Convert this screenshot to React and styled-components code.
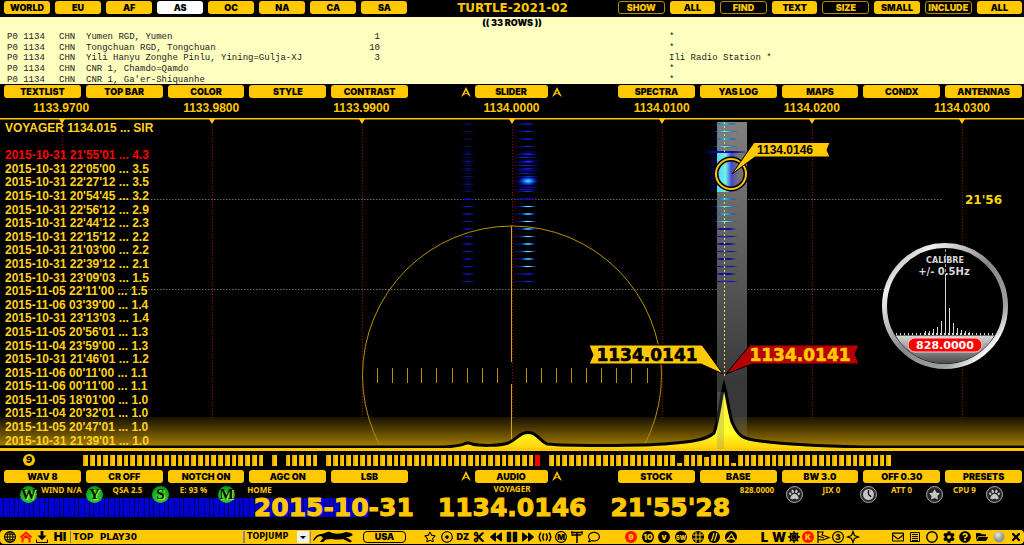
import React from "react";
import styled, { createGlobalStyle, css } from "styled-components";
import {
  FaPaw, FaStar, FaRegStar, FaRegDotCircle, FaCut, FaBackward, FaPause, FaForward,
  FaRegComment, FaRegEnvelope, FaFolderOpen, FaCog, FaQuestionCircle, FaTimes,
} from "react-icons/fa";

const gold = "#ffc800";
const heavy = `Inter, "DejaVu Sans", sans-serif`;
const arial = `"Liberation Sans", Arial, sans-serif`;
const verdana = `"DejaVu Sans", Verdana, sans-serif`;

const GlobalStyle = createGlobalStyle`
  * { box-sizing: border-box; }
  body { margin: 0; background: #000; overflow-x: hidden; }
  button, input, select { font: inherit; color: inherit; margin: 0; padding: 0; border: 0; background: none; }
`;

const Page = styled.main`
  display: flex;
  flex-direction: column;
  background: #000;
  color: ${gold};
  font: 900 9px/10px ${heavy};
`;

const Bar = styled.nav`
  display: grid;
  grid-template-columns: ${(p) => p.$columns};
  align-items: center;
  height: ${(p) => p.$height || 17}px;
  padding: 0 2px ${(p) => (p.$height ? 0 : 2)}px 4px;
`;

const Group = styled.div`
  display: flex;
  gap: 5px;
`;

const Centre = styled.div`
  display: flex;
  align-items: center;
  justify-content: center;
  gap: 4px;
  padding-right: 4px;
`;

const Key = styled.button`
  flex: 1 1 0;
  min-width: 0;
  height: 13px;
  border-radius: 3px;
  background: ${gold};
  color: #000;
  font: 900 9px/13px ${heavy};
  text-align: center;
  white-space: nowrap;
  ${(p) => p.$active && css`background: #fff;`}
  ${(p) => p.$outline && css`
    background: #000;
    color: ${gold};
    border: 1px solid #b48c00;
    line-height: 11px;
  `}
`;

const CentreKey = styled(Key)`
  flex: 0 0 73px;
`;

const ArrowKey = styled.button`
  display: flex;
  width: 10px;
  height: 10px;
`;

const Title = styled.h1`
  margin: 0;
  text-align: center;
  font: 700 12px/14px ${verdana};
  white-space: nowrap;
`;

const Listing = styled.section`
  height: 67px;
  overflow: hidden;
  background: #ffffc0;
  color: #000;
`;

const Count = styled.p`
  margin: 0;
  height: 15px;
  font: 900 9px/12px ${heavy};
  text-align: center;
`;

const Stations = styled.table`
  width: 100%;
  height: 53px;
  table-layout: fixed;
  border-collapse: collapse;
  font: 400 9px/10px "Liberation Mono", monospace;
  color: #222;
  td { padding: 0; white-space: pre; overflow: visible; }
  td:first-child { padding-left: 7px; }
  td.power { text-align: right; }
  td.remark { padding-left: 289px; }
`;

const Scale = styled.div`
  display: flex;
  justify-content: space-between;
  height: 16px;
  padding: 0 34px 0 33px;
  font: 700 12px/15px ${arial};
`;

const Plot = styled.section`
  position: relative;
  > svg { display: block; width: 100%; height: auto; }
`;

const Log = styled.ol`
  position: absolute;
  inset: 5px auto 3px 5px;
  display: flex;
  flex-direction: column;
  justify-content: space-between;
  margin: 0;
  padding: 0;
  list-style: none;
  font: 700 12px/13px ${arial};
  color: #ffd21c;
  white-space: pre;
`;

const LogRow = styled.li`
  min-height: 13px;
  color: ${(p) => (p.$alert ? "#ff0000" : "inherit")};
`;

const Timeline = styled.div`
  display: flex;
  align-items: center;
  height: 18px;
  padding: 0 133px 0 23px;
`;

const Nine = styled.button`
  width: 12px;
  height: 12px;
  margin-right: 48px;
  border-radius: 50%;
  background: ${gold};
  color: #000;
  font: 900 9px/12px ${heavy};
`;

const Bars = styled.div`
  flex: 1;
  display: flex;
  align-items: flex-end;
  gap: 2px;
  height: 11px;
`;

const Tick = styled.i`
  flex: 1 1 0;
  height: ${(p) => p.$height}px;
  background: ${(p) => (p.$red ? "#ff0000" : `linear-gradient(90deg, #e0a800 20%, ${gold} 50%)`)};
`;

const Status = styled.div`
  position: relative;
  z-index: 1;
  display: grid;
  grid-template-columns: 20fr 66fr 66fr 66fr 66fr 444fr 75fr 74fr 66fr 60fr 21fr;
  height: 14px;
  font: 700 8px/12px "Noto Sans", sans-serif;
  white-space: nowrap;
`;

const Reading = styled.div`
  display: flex;
  align-items: flex-start;
  span { flex: 1; padding-top: 1px; text-align: center; }
`;

const Station = styled.div`
  grid-column: 6;
  padding-left: 12px;
  text-align: center;
  line-height: 12px;
`;

const Badge = styled.button`
  display: flex;
  align-items: center;
  justify-content: center;
  flex: none;
  width: 17px;
  height: 17px;
  margin-top: 3px;
  border-radius: 50%;
  ${(p) => (p.$green
    ? css`
      background: radial-gradient(circle at 50% 70%, #2ee03c, #12a820 60%, #0a7014);
      color: #001000;
      font: 700 15px/17px "Liberation Serif", serif;
      text-shadow: 1px 1px 0 #c8e020;
    `
    : css`
      border: 1px solid #a8a8a8;
      box-shadow: inset 0 0 0 1px #333;
      background: #202020;
      color: #c4c4c4;
      svg { width: 11px; height: 11px; }
    `)}
`;

const Readout = styled.div`
  display: flex;
  justify-content: center;
  gap: 24px;
  height: 22px;
  padding-right: 40px;
  font: 700 25px/22px ${verdana};
  -webkit-text-stroke: 1px ${gold};
  white-space: nowrap;
  background:
    repeating-linear-gradient(90deg, transparent 0 3px, #00003c 3px 4px, transparent 4px 9px, #000070 9px 10px, transparent 10px 14px, #000050 14px 15px) 0 1px / 36% 19px no-repeat,
    linear-gradient(#0000d6, #0000d6) 0 1px / 36% 19px no-repeat;
`;

const Toolbar = styled.footer`
  display: grid;
  grid-template-columns: 363fr 43fr 16fr 180fr 21fr 116fr 18fr 103fr 30fr 134fr;
  align-items: center;
  height: 14px;
  margin-top: 11px;
  border-radius: 4px;
  background: ${gold};
  color: #000;
`;

const Tools = styled.div`
  grid-column: ${(p) => p.$column};
  display: grid;
  grid-auto-flow: column;
  grid-auto-columns: 1fr;
`;

const Tool = styled.button`
  display: flex;
  align-items: center;
  justify-content: center;
  min-width: 0;
  height: 14px;
  color: ${(p) => p.$color || "#000"};
  font: 900 ${(p) => p.$size || 13}px/14px ${heavy};
  svg { width: 12px; height: 12px; flex: none; overflow: visible; }
`;

const Command = styled.div`
  display: flex;
  align-items: center;
  height: 14px;
  padding-left: 2px;
  ${Tool} { width: 16px; }
  ${Tool}:nth-of-type(4) { width: 20px; }
`;

const Entry = styled.input`
  flex: 1;
  min-width: 0;
  height: 12px;
  padding-left: 2px;
  border-left: 1px solid #777;
  border-right: 2px solid #888;
  font: 700 9px/12px ${verdana};
`;

const Picker = styled.label`
  position: relative;
  display: block;
  width: 66px;
  height: 12px;
  border-right: 1px solid #888;
  select {
    appearance: none;
    width: 100%;
    height: 12px;
    padding-left: 2px;
    font: 700 8px/12px ${verdana};
  }
  svg { position: absolute; right: 1px; top: 0; pointer-events: none; }
`;

const Cat = styled.svg`
  width: 41px;
  height: 12px;
  margin: 0 9px 0 2px;
`;

const Country = styled.button`
  height: 12px;
  border: 1px solid #000;
  border-radius: 4px;
  font: 900 9px/10px ${heavy};
`;

const regions = ["WORLD", "EU", "AF", "AS", "OC", "NA", "CA", "SA"];
const filters = ["SHOW", "ALL", "FIND", "TEXT", "SIZE", "SMALL", "INCLUDE", "ALL"];

const stations = [
  ["Yumen RGD, Yumen", "1", "*"],
  ["Tongchuan RGD, Tongchuan", "10", "*"],
  ["Yili Hanyu Zonghe Pinlu, Yining=Gulja-XJ", "3", "Ili Radio Station *"],
  ["CNR 1, Chamdo=Qamdo", "", "*"],
  ["CNR 1, Ga'er-Shiquanhe", "", "*"],
];

const frequencies = ["1133.9700", "1133.9800", "1133.9900", "1134.0000", "1134.0100", "1134.0200", "1134.0300"];

const log = [
  "VOYAGER 1134.015 ... SIR", "",
  "2015-10-31 21'55'01 ... 4.3", "2015-10-31 22'05'00 ... 3.5", "2015-10-31 22'27'12 ... 3.5",
  "2015-10-31 20'54'45 ... 3.2", "2015-10-31 22'56'12 ... 2.9", "2015-10-31 22'44'12 ... 2.3",
  "2015-10-31 22'15'12 ... 2.2", "2015-10-31 21'03'00 ... 2.2", "2015-10-31 22'39'12 ... 2.1",
  "2015-10-31 23'09'03 ... 1.5", "2015-11-05 22'11'00 ... 1.5", "2015-11-06 03'39'00 ... 1.4",
  "2015-10-31 23'13'03 ... 1.4", "2015-11-05 20'56'01 ... 1.3", "2015-11-04 23'59'00 ... 1.3",
  "2015-10-31 21'46'01 ... 1.2", "2015-11-06 00'11'00 ... 1.1", "2015-11-06 00'11'00 ... 1.1",
  "2015-11-05 18'01'00 ... 1.0", "2015-11-04 20'32'01 ... 1.0", "2015-11-05 20'47'01 ... 1.0",
  "2015-10-31 21'39'01 ... 1.0",
];

const emptySlots = [27, 29, 35, 68];
const shortSlots = { 88: 3, 92: 9, 96: 3 };
const slots = Array.from({ length: 120 }, (_, i) =>
  emptySlots.includes(i) ? 0 : shortSlots[i] || 11
);

const Chevron = ({ label }) => (
  <ArrowKey aria-label={label}>
    <svg width="10" height="10" viewBox="0 0 10 10">
      <path d="M5 0L10 10L5 6.500L0 10Z M5 3.5L3.300 7L5 5.500L6.700 7Z" fill={gold} fillRule="evenodd" />
    </svg>
  </ArrowKey>
);

const Keys = ({ items }) => (
  <Group>{items.map((t) => <Key key={t}>{t}</Key>)}</Group>
);

const KeyBar = ({ left, centre, right, height }) => (
  <Bar $columns="404fr 210fr 404fr" $height={height}>
    <Keys items={left} />
    <Centre>
      <Chevron label={`${centre} down`} />
      <CentreKey>{centre}</CentreKey>
      <Chevron label={`${centre} up`} />
    </Centre>
    <Keys items={right} />
  </Bar>
);

const Disc = ({ text, fill = "#000", ink = gold, ring, size = 8 }) => (
  <svg viewBox="0 0 12 12">
    <circle cx="6" cy="6" r={ring ? 5.4 : 6} fill={ring ? "none" : fill} stroke={ring ? "#000" : "none"} strokeWidth="1.2" />
    <text x="6" y="9" textAnchor="middle" fontFamily={heavy} fontWeight="900" fontSize={size} fill={ring ? "#000" : ink}>{text}</text>
  </svg>
);

const Globe = () => (
  <svg viewBox="0 0 12 12" fill="none" stroke="#000">
    <circle cx="6" cy="6" r="5.4" strokeWidth="1.2" />
    <path d="M6 0.5V11.5M0.5 6H11.5M1.5 3.2H10.5M1.5 8.8H10.5" />
    <ellipse cx="6" cy="6" rx="2.8" ry="5.4" />
  </svg>
);

const GlobeSolid = () => (
  <svg viewBox="0 0 12 12">
    <circle cx="6" cy="6" r="6" />
    <path d="M4 1V11M8 1V11M1 4H11M1 8H11" stroke={gold} strokeWidth="1.1" />
  </svg>
);

const House = () => (
  <svg viewBox="0 0 12 12" fill="none" stroke="#ff1800" strokeWidth="2">
    <path d="M0.5 6.5L6 1.5L11.5 6.5M2.5 11.5V8L6 5L9.5 8V11.5" />
  </svg>
);

const Fetch = () => (
  <svg viewBox="0 0 12 12">
    <path d="M4.6 0H7.4V4.5H10.5L6 9.2L1.5 4.5H4.6Z" />
    <path d="M0.5 8.5V11.5H11.5V8.5" fill="none" stroke="#000" />
  </svg>
);

const Helm = () => (
  <svg viewBox="0 0 12 12" fill="none" stroke="#000">
    <circle cx="6" cy="6" r="3.800" strokeWidth="1.600" />
    <path d="M6 0V12M0 6H12M1.800 1.800L10.200 10.200M10.200 1.800L1.800 10.200" strokeWidth="1.300" />
  </svg>
);

const Waves = () => (
  <svg viewBox="0 0 12 12" fill="none" stroke="#000" strokeWidth="1.5">
    <path d="M2 1.5Q-1.5 6 2 10.5M5 2.5Q2.400 6 5 9.5M7 2.5Q9.600 6 7 9.5M10 1.5Q13.500 6 10 10.5" />
  </svg>
);

const Aerial = () => (
  <svg viewBox="0 0 12 12" fill="none" stroke="#000">
    <path d="M0 1.500H12M1 4H10M6 1V12" strokeWidth="1.6" />
    <path d="M1 0V5M11 0V4" />
  </svg>
);

const Slashes = () => (
  <svg viewBox="0 0 12 12">
    <circle cx="6" cy="6" r="6" />
    <path d="M3.500 10L6 2M6.5 10L9 2" stroke={gold} strokeWidth="1.3" />
  </svg>
);

const Peak = () => (
  <svg viewBox="0 0 12 12">
    <circle cx="6" cy="6" r="6" />
    <path d="M2 8.500L6.500 3L10 9L7 7.500Z" fill="none" stroke={gold} strokeWidth="1.2" />
  </svg>
);

const Pennant = () => (
  <svg viewBox="0 0 12 12" fill="none" stroke="#000" strokeWidth="1.2">
    <path d="M1 0V12M0 1H6L5 4L12 6.500L6 9L1 8.500M1 5L7 7" />
  </svg>
);

const Spark = () => (
  <svg viewBox="0 0 12 12" fill="none" stroke="#000" strokeWidth="1.2">
    <path d="M6 0.500L7.500 4.500L11.500 6L7.500 7.500L6 11.500L4.500 7.500L0.500 6L4.500 4.500Z" />
  </svg>
);

const Sheet = () => (
  <svg viewBox="0 0 12 12" fill="none" stroke="#000">
    <path d="M1.500 1.500H10.500V10.500H1.500ZM3 3.500H9M3 5.500H9M3 7.500H9M3 9.500H9" />
  </svg>
);

const Ring = () => (
  <svg viewBox="0 0 12 12"><circle cx="6" cy="6" r="5.200" fill="none" stroke="#000" strokeWidth="1.4" /></svg>
);

const Ball = () => (
  <svg viewBox="0 0 12 12">
    <defs>
      <radialGradient id="ball" cx="0.4" cy="0.3">
        <stop offset="0" stopColor="#e8e8e8" /><stop offset="1" stopColor="#969696" />
      </radialGradient>
    </defs>
    <circle cx="6" cy="6" r="5.5" fill="url(#ball)" />
  </svg>
);

const Clock = () => (
  <svg viewBox="0 0 12 12">
    <circle cx="6" cy="6" r="6" fill="#c4c4c4" />
    <path d="M6 1V6L9 8.500" fill="none" stroke="#111" strokeWidth="1.5" />
  </svg>
);

const rowStep = 7.5;
const streakRows = Array.from({ length: 22 }, (_, i) => 124 + i * rowStep);

const Streak = ({ x, y, w, kind, o = 1 }) => (
  <ellipse cx={x} cy={y} rx={w} ry="1.2" fill={`url(#${kind})`} opacity={o} />
);

const Waterfall = () => (
  <g>
    {streakRows.map((y, i) => {
      const dense = i >= 4 && i <= 9;
      return (
        <g key={y}>
          <Streak x={468} y={y} w={9} kind="blue" o={i > 9 ? 0.8 : 0.4} />
          <Streak x={524} y={y} w={i > 9 ? 18 : 12} kind="blue" o={0.6} />
          <Streak x={528} y={y} w={9} kind={i > 10 && i < 20 ? "cyan" : "blue"} />
          {!dense && <Streak x={725} y={y} w={13} kind={i < 14 ? "cyan" : "blue"} />}
        </g>
      );
    })}
    {Array.from({ length: 15 }, (_, i) => (
      <g key={i}>
        <Streak x={530 - (i % 3) * 2} y={152 + i * 2.7} w={14 + (i % 4)} kind="blue" o={0.4 + (i % 3) * 0.2} />
        <Streak x={468} y={152 + i * 2.7} w={7} kind="blue" o={0.3} />
        <Streak x={713} y={152 + i * 2.7} w={5} kind="blue" o={0.4} />
      </g>
    ))}
    <ellipse cx="528" cy="181" rx="11" ry="5" fill="url(#hot)" />
    <Streak x={724} y={152} w={30} kind="blue" />
  </g>
);

const Gauge = () => (
  <g>
    <circle cx="945" cy="306" r="60.500" fill="#000" stroke="url(#rim)" strokeWidth="5" />
    <path d="M895.500 335.500H994.500A57.500 57.500 0 0 1 895.500 335.500Z" fill="url(#pan)" />
    <g stroke="#d8d8d8">
      <path d="M945.500 249V335" strokeDasharray="3 2" opacity="0.7" />
      <path d="M945.500 274V335M949.500 308V335" />
      {[[941.5, 14], [937.5, 8], [933.5, 6], [929.5, 4], [925.5, 4], [953.5, 12], [957.5, 7], [961.5, 5], [965.5, 4], [969.5, 3]].map(([x, h]) => (
        <path key={x} d={`M${x} ${335 - h}V335`} />
      ))}
      <path d="M896 334H994" strokeDasharray="1 3" strokeWidth="2" />
    </g>
    <rect x="908" y="338" width="74" height="14" rx="7" fill="#ff0000" stroke="#ffd0d0" strokeWidth="1" />
    <g textAnchor="middle" fontFamily={verdana} fontWeight="700" fill="#d8d8d8">
      <text x="945" y="263" fontSize="8">CALIBRE</text>
      <text x="944" y="275" fontSize="10">+/- 0.5Hz</text>
      <text x="945" y="349" fontSize="11" fill="#fff">828.0000</text>
    </g>
  </g>
);

const spectrum =
  "M-4 447H445C455 446 460 446 464 444Q468 442 472 444C480 446 500 446 508 443C518 439 519 432.500 528 432.500C537 432.500 539 440 547 444C570 446 640 446 670 443.500C690 442 706 440 714 433C719 420 721 396 724 385C727 396 729 412 732 422C738 436 742 439 760 441C790 445 840 446.500 862 447H1028V452H-4Z";

const Spectrogram = () => (
  <svg viewBox="0 117 1024 334" role="img" aria-label="Spectrum and waterfall">
    <defs>
      <radialGradient id="blue"><stop offset="0" stopColor="#2030ff" /><stop offset="0.5" stopColor="#0c0ca0" /><stop offset="1" stopColor="#000030" stopOpacity="0" /></radialGradient>
      <radialGradient id="cyan"><stop offset="0" stopColor="#70ffe0" /><stop offset="0.45" stopColor="#20a0e8" /><stop offset="1" stopColor="#0000a0" stopOpacity="0" /></radialGradient>
      <radialGradient id="hot"><stop offset="0" stopColor="#60e8ff" /><stop offset="0.4" stopColor="#1070f0" /><stop offset="1" stopColor="#0000c0" stopOpacity="0" /></radialGradient>
      <linearGradient id="floor" x2="0" y2="1"><stop offset="0" stopColor="#a07800" stopOpacity="0.15" /><stop offset="1" stopColor="#b48a00" /></linearGradient>
      <linearGradient id="band" x2="0" y2="1"><stop offset="0" stopColor="#808080" /><stop offset="0.55" stopColor="#505050" /><stop offset="0.8" stopColor="#383838" /><stop offset="1" stopColor="#383838" /></linearGradient>
      <linearGradient id="dense"><stop offset="0" stopColor="#58d8f0" /><stop offset="0.4" stopColor="#60f0ff" /><stop offset="0.65" stopColor="#4848d0" /><stop offset="1" stopColor="#5050a0" stopOpacity="0" /></linearGradient>
      <linearGradient id="wave" x2="0" y2="1"><stop offset="0" stopColor="#fff040" /><stop offset="0.7" stopColor="#ffff28" /><stop offset="1" stopColor="#ffc800" /></linearGradient>
      <linearGradient id="rim" x2="1" y2="1"><stop offset="0" stopColor="#909090" /><stop offset="0.2" stopColor="#f0f0f0" /><stop offset="0.5" stopColor="#88888c" /><stop offset="0.75" stopColor="#a0a0a4" /><stop offset="0.87" stopColor="#fff" /><stop offset="1" stopColor="#909090" /></linearGradient>
      <linearGradient id="pan" x2="0" y2="1"><stop offset="0" stopColor="#d8d8d8" /><stop offset="1" stopColor="#484848" /></linearGradient>
    </defs>
    <rect y="118" width="1024" height="1.500" fill={gold} />
    {[62, 212, 362, 512, 662, 812, 962].map((x) => (
      <g key={x}>
        <path d={`M${x - 3} 119H${x + 3}L${x} 124Z`} fill={gold} />
        <path d={`M${x + 0.5} 126V418`} stroke="#960000" strokeDasharray="1 2" />
      </g>
    ))}
    <path d="M118 199.500H943M118 289.500H884" stroke="#686868" strokeDasharray="1.500 1.500" />
    <rect y="417" width="1024" height="32" fill="url(#floor)" />
    <rect x="717" y="122" width="30" height="327" fill="url(#band)" />
    <rect x="717" y="417" width="30" height="32" fill="url(#floor)" opacity="0.7" />
    <rect x="717" y="152" width="22" height="40" fill="url(#dense)" />
    <Waterfall />
    <g fill="none" stroke="#b89000">
      <circle cx="512" cy="375.500" r="149.500" />
      <path d="M511.500 226V362M511.500 384V445" stroke="#d8a800" />
      {[377, 392, 407, 421, 436, 452, 467, 482, 497, 526, 541, 556, 571, 586, 601, 616, 631, 647].map((x) => (
        <path key={x} d={`M${x + 0.5} 368V383`} />
      ))}
    </g>
    <path d={spectrum} fill="url(#wave)" stroke="#000" strokeWidth="3" />
    <path d="M-4 449.500H1028" stroke={gold} strokeWidth="3" />
    <path d="M717 392H724V449H717Z" fill="#808080" opacity="0.25" />
    <path d="M724.500 122V376" stroke="#e8d848" strokeDasharray="2 2" />
    <path d="M589 345H702L723 374L701 364H589L593 355Z" fill={gold} stroke="#000" strokeWidth="1" />
    <path d="M750 345H859L855 354L859 364H752L726 374Z" fill="#b40000" stroke="#000" strokeWidth="1" />
    <g fontFamily={verdana} fontWeight="700" fontSize="17" textAnchor="middle" strokeWidth="0.600">
      <text x="647" y="361" stroke="#000">1134.0141</text>
      <text x="800" y="361" fill={gold} stroke={gold}>1134.0141</text>
    </g>
    <circle cx="731" cy="174" r="15" fill="none" stroke="#000" strokeWidth="5" />
    <circle cx="731" cy="174" r="15" fill="none" stroke={gold} strokeWidth="2" />
    <path d="M754 142.500H830L827 150L830 157H755L732 174Z" fill={gold} stroke="#000" />
    <text x="785" y="154" textAnchor="middle" fontFamily={arial} fontWeight="700" fontSize="12">1134.0146</text>
    <text x="965" y="204" fontFamily={verdana} fontWeight="700" fontSize="12" fill="#ffd800">21'56</text>
    <Gauge />
  </svg>
);

export default function App() {
  return (
    <Page>
      <GlobalStyle />
      <Bar $columns="403fr 210fr 404fr">
        <Group>{regions.map((t) => <Key key={t} $active={t === "AS"}>{t}</Key>)}</Group>
        <Title>TURTLE-2021-02</Title>
        <Group>{filters.map((t, i) => <Key key={i} $outline={i % 2 === 0}>{t}</Key>)}</Group>
      </Bar>

      <Listing>
        <Count>(( 33 ROWS ))</Count>
        <Stations>
          <colgroup><col width="59" /><col width="27" /><col width="230" /><col width="64" /><col /></colgroup>
          <tbody>
            {stations.map(([name, power, remark]) => (
              <tr key={name}>
                <td>P0 1134</td><td>CHN</td><td>{name}</td>
                <td className="power">{power}</td><td className="remark">{remark}</td>
              </tr>
            ))}
          </tbody>
        </Stations>
      </Listing>

      <KeyBar
        left={["TEXTLIST", "TOP BAR", "COLOR", "STYLE", "CONTRAST"]}
        centre="SLIDER"
        right={["SPECTRA", "YAS LOG", "MAPS", "CONDX", "ANTENNAS"]}
      />
      <Scale>{frequencies.map((f) => <span key={f}>{f}</span>)}</Scale>

      <Plot>
        <Spectrogram />
        <Log>{log.map((t, i) => <LogRow key={i} $alert={i === 2}>{t}</LogRow>)}</Log>
      </Plot>

      <Timeline>
        <Nine>9</Nine>
        <Bars>{slots.map((h, i) => <Tick key={i} $height={h} $red={i === 67} />)}</Bars>
      </Timeline>

      <KeyBar
        height={14}
        left={["WAV 8", "CR OFF", "NOTCH ON", "AGC ON", "LSB"]}
        centre="AUDIO"
        right={["STOCK", "BASE", "BW 3.0", "OFF 0.30", "PRESETS"]}
      />

      <Status>
        <i />
        {[["W", "WIND N/A"], ["Y", "QSA 2.5"], ["S", "E: 93 %"], ["M", "HOME"]].map(([k, t]) => (
          <Reading key={k}><Badge $green>{k}</Badge><span>{t}</span></Reading>
        ))}
        <Station>VOYAGER</Station>
        <Reading><span>828.0000</span><Badge aria-label="Base"><FaPaw /></Badge></Reading>
        <Reading><span>JIX 0</span><Badge aria-label="Clock"><Clock /></Badge></Reading>
        <Reading><span>ATT 0</span><Badge aria-label="Favourite"><FaStar /></Badge></Reading>
        <Reading><span>CPU 9</span><Badge aria-label="Processor"><FaPaw /></Badge></Reading>
      </Status>

      <Readout><span>2015-10-31</span><span>1134.0146</span><span>21'55'28</span></Readout>

      <Toolbar>
        <Command>
          <Tool aria-label="Web"><Globe /></Tool>
          <Tool aria-label="Home"><House /></Tool>
          <Tool aria-label="Download"><Fetch /></Tool>
          <Tool $size={12}>HI</Tool>
          <Entry aria-label="Command" defaultValue="TOP  PLAY30" />
          <Picker>
            <select aria-label="Jump"><option>TOPJUMP</option></select>
            <svg width="12" height="12" viewBox="0 0 12 12">
              <rect width="12" height="12" fill="#f0f0f0" />
              <path d="M3 5H9L6 8Z" />
            </svg>
          </Picker>
          <Cat viewBox="0 0 41 12" aria-label="Jaguar">
            <path d="M0 9Q4 2 9 3L13 1.500Q16 0 19 2Q26 4 33 1L38 2L40 4L36 6L33 6L39 10L37 11.500L30 8Q24 9 19 8L13 8.500L10 11H7L10 7L8 5Q4 5 1 10Z" />
          </Cat>
        </Command>
        <Country>USA</Country>
        <Tools $column={4}>
          <Tool aria-label="Star"><FaRegStar /></Tool>
          <Tool aria-label="Target"><FaRegDotCircle /></Tool>
          <Tool $size={9}>DZ</Tool>
          <Tool aria-label="Cut"><FaCut /></Tool>
          <Tool aria-label="Rewind"><FaBackward /></Tool>
          <Tool aria-label="Pause"><FaPause /></Tool>
          <Tool aria-label="Forward"><FaForward /></Tool>
          <Tool aria-label="Broadcast"><Waves /></Tool>
          <Tool aria-label="Mark"><Disc text="M" ring /></Tool>
          <Tool aria-label="Antenna"><Aerial /></Tool>
          <Tool aria-label="Comment"><FaRegComment /></Tool>
        </Tools>
        <Tools $column={6}>
          <Tool aria-label="Nine"><Disc text="9" fill="#ff1400" /></Tool>
          <Tool aria-label="Ten"><Disc text="10" /></Tool>
          <Tool aria-label="V"><Disc text="v" /></Tool>
          <Tool aria-label="Shortwave"><Disc text="SW" size={6} /></Tool>
          <Tool aria-label="Grid"><GlobeSolid /></Tool>
          <Tool aria-label="Parallel"><Slashes /></Tool>
          <Tool aria-label="Peak"><Peak /></Tool>
        </Tools>
        <Tools $column={8}>
          <Tool>L</Tool>
          <Tool>W</Tool>
          <Tool aria-label="Helm"><Helm /></Tool>
          <Tool aria-label="K"><Disc text="K" fill="#ff1400" /></Tool>
          <Tool aria-label="Flag"><Pennant /></Tool>
          <Tool aria-label="Three"><Disc text="3" ring /></Tool>
          <Tool aria-label="Compass"><Spark /></Tool>
        </Tools>
        <Tools $column={10}>
          <Tool aria-label="Mail"><FaRegEnvelope /></Tool>
          <Tool aria-label="List"><Sheet /></Tool>
          <Tool aria-label="Record"><Ring /></Tool>
          <Tool aria-label="Settings"><FaCog /></Tool>
          <Tool aria-label="Help"><FaQuestionCircle /></Tool>
          <Tool aria-label="Open"><FaFolderOpen /></Tool>
          <Tool aria-label="Status"><Ball /></Tool>
          <Tool aria-label="Close"><FaTimes /></Tool>
        </Tools>
      </Toolbar>
    </Page>
  );
}
